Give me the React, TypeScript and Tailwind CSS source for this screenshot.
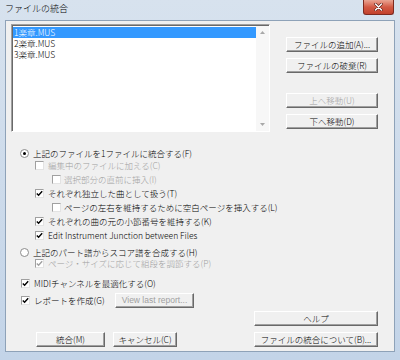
import React from 'react';

type BtnProps = { label: string; className?: string; disabled?: boolean };

const Btn = ({ label, className = '', disabled = false }: BtnProps) => (
  <div
    className={`flex items-center justify-center h-[15px] bg-[#f0f0f0] border border-t-white border-l-white border-r-[#696969] border-b-[#696969] shadow-[inset_-1px_-1px_0_#a0a0a0] text-[8.5px] leading-none whitespace-nowrap ${
      disabled ? 'text-[#a0a0a0]' : 'text-black'
    } ${className}`}
  >
    {label}
  </div>
);

const Check = ({ checked = false, disabled = false }: { checked?: boolean; disabled?: boolean }) => (
  <div className="w-[9px] h-[9px] shrink-0 bg-white border border-t-[#a0a0a0] border-l-[#a0a0a0] border-r-[#e3e3e3] border-b-[#e3e3e3] flex items-center justify-center">
    {checked && (
      <svg width="7" height="7" viewBox="0 0 7 7">
        <path
          d="M0.8 3.4 L2.6 5.3 L6.2 1.2"
          fill="none"
          stroke={disabled ? '#a0a0a0' : '#000'}
          strokeWidth="1.4"
        />
      </svg>
    )}
  </div>
);

const Radio = ({ checked = false }: { checked?: boolean }) => (
  <div className="w-[9px] h-[9px] shrink-0 rounded-full bg-white border border-[#8c8c8c] flex items-center justify-center">
    {checked && <div className="w-[3px] h-[3px] rounded-full bg-black" />}
  </div>
);

type RowProps = {
  label: string;
  kind?: 'check' | 'radio';
  checked?: boolean;
  disabled?: boolean;
  indent: string;
  height: string;
  gap?: string;
  extra?: string;
};

const Row = ({ label, kind = 'check', checked, disabled, indent, height, gap = 'gap-[4px]', extra = '' }: RowProps) => (
  <div className={`flex items-center ${height} ${indent} ${gap} ${extra}`}>
    {kind === 'radio' ? <Radio checked={checked} /> : <Check checked={checked} disabled={disabled} />}
    <span className={`text-[8.5px] leading-none whitespace-nowrap ${disabled ? 'text-[#a0a0a0]' : 'text-black'}`}>
      {label}
    </span>
  </div>
);

const files = ['1楽章.MUS', '2楽章.MUS', '3楽章.MUS'];

export default function App() {
  return (
    <div className="w-[400px] h-[360px] bg-gradient-to-b from-[#d7e2ee] to-[#c3d4e8] flex flex-col font-['Noto_Sans_CJK_JP',sans-serif] font-light select-none">
      {/* title bar */}
      <div className="h-[20px] flex items-start justify-between">
        <span className="pl-[5px] pt-[3px] text-[9px] leading-[12px] text-black">ファイルの統合</span>
        <div className="mr-[6px] w-[31px] h-[15px] rounded-b-[3px] border border-t-0 border-[#7d2a20] bg-gradient-to-b from-[#e9a493] via-[#d35a45] to-[#c2412c] flex items-center justify-center">
          <svg width="9" height="8" viewBox="0 0 9 8">
            <path d="M1.5 1 L7.5 7 M7.5 1 L1.5 7" stroke="#5a1a12" strokeWidth="2.6" strokeLinecap="round" />
            <path d="M1.5 1 L7.5 7 M7.5 1 L1.5 7" stroke="#fff" strokeWidth="1.5" strokeLinecap="round" />
          </svg>
        </div>
      </div>

      {/* client area */}
      <div className="flex-1 mx-[5px] mb-[8px] bg-[#f0f0f0] border border-[#8ea2b8] flex flex-col">
        <div className="flex pt-[3px] pl-[5px]">
          {/* file list */}
          <div className="w-[259px] h-[108px] bg-white border border-t-[#a0a0a0] border-l-[#a0a0a0] border-r-white border-b-white shadow-[inset_1px_1px_0_#696969] flex">
            <div className="flex-1 pt-[2px] pl-[1px]">
              {files.map((f, i) => (
                <div
                  key={f}
                  className={`h-[11px] flex items-center pl-[1px] text-[8.5px] leading-none ${
                    i === 0 ? 'bg-[#3399ff] text-white' : 'text-black'
                  }`}
                >
                  {f}
                </div>
              ))}
            </div>
            <div className="w-[13px] mt-[1px] bg-[#f7f7f7] flex flex-col justify-between">
              <div className="h-[13px] flex items-center justify-center">
                <svg width="5" height="3" viewBox="0 0 5 3">
                  <path d="M0 3 L2.5 0 L5 3 Z" fill="#a8a8a8" />
                </svg>
              </div>
              <div className="h-[13px] flex items-center justify-center">
                <svg width="5" height="3" viewBox="0 0 5 3">
                  <path d="M0 0 L2.5 3 L5 0 Z" fill="#a8a8a8" />
                </svg>
              </div>
            </div>
          </div>

          {/* list buttons */}
          <div className="ml-[16px] pt-[13px] w-[92px] flex flex-col">
            <Btn label="ファイルの追加(A)..." />
            <Btn label="ファイルの破棄(R)" className="mt-[6px]" />
            <Btn label="上へ移動(U)" disabled className="mt-[20px]" />
            <Btn label="下へ移動(D)" className="mt-[6px]" />
          </div>
        </div>

        {/* options */}
        <div className="flex flex-col mt-[16px]">
          <Row kind="radio" checked label="上記のファイルを1ファイルに統合する(F)" indent="ml-[14px]" height="h-[10px]" />
          <Row disabled label="編集中のファイルに加える(C)" indent="ml-[29px]" height="h-[14px]" />
          <Row disabled label="選択部分の直前に挿入(I)" indent="ml-[46px]" height="h-[14px]" gap="gap-[3px]" />
          <Row checked label="それぞれ独立した曲として扱う(T)" indent="ml-[29px]" height="h-[14px]" />
          <Row label="ページの左右を維持するために空白ページを挿入する(L)" indent="ml-[46px]" height="h-[14px]" gap="gap-[3px]" />
          <Row checked label="それぞれの曲の元の小節番号を維持する(K)" indent="ml-[29px]" height="h-[14px]" />
          <Row checked label="Edit Instrument Junction between Files" indent="ml-[29px]" height="h-[14px]" />

          <Row kind="radio" label="上記のパート譜からスコア譜を合成する(H)" indent="ml-[14px]" height="h-[11px]" extra="mt-[5px]" />
          <Row checked disabled label="ページ・サイズに応じて組段を調節する(P)" indent="ml-[29px]" height="h-[11px]" />

          <Row checked label="MIDIチャンネルを最適化する(O)" indent="ml-[15px]" height="h-[14px]" extra="mt-[7px]" />
          <div className="flex items-center h-[15px] mt-[3px] ml-[15px]">
            <div className="w-[94px] flex items-center gap-[4px]">
              <Check checked />
              <span className="text-[8.5px] leading-none whitespace-nowrap text-black">レポートを作成(G)</span>
            </div>
            <Btn label="View last report..." disabled className="w-[79px] font-['Liberation_Sans',sans-serif] font-normal" />
          </div>
        </div>

        {/* bottom buttons */}
        <div className="flex justify-between items-end mt-[3px]">
          <div className="flex gap-[8px] pl-[30px]">
            <Btn label="統合(M)" className="w-[69px]" />
            <Btn label="キャンセル(C)" className="w-[64px]" />
          </div>
          <div className="flex flex-col w-[124px] mr-[16px]">
            <Btn label="ヘルプ" />
            <Btn label="ファイルの統合について(B)..." className="mt-[6px]" />
          </div>
        </div>
      </div>
    </div>
  );
}
